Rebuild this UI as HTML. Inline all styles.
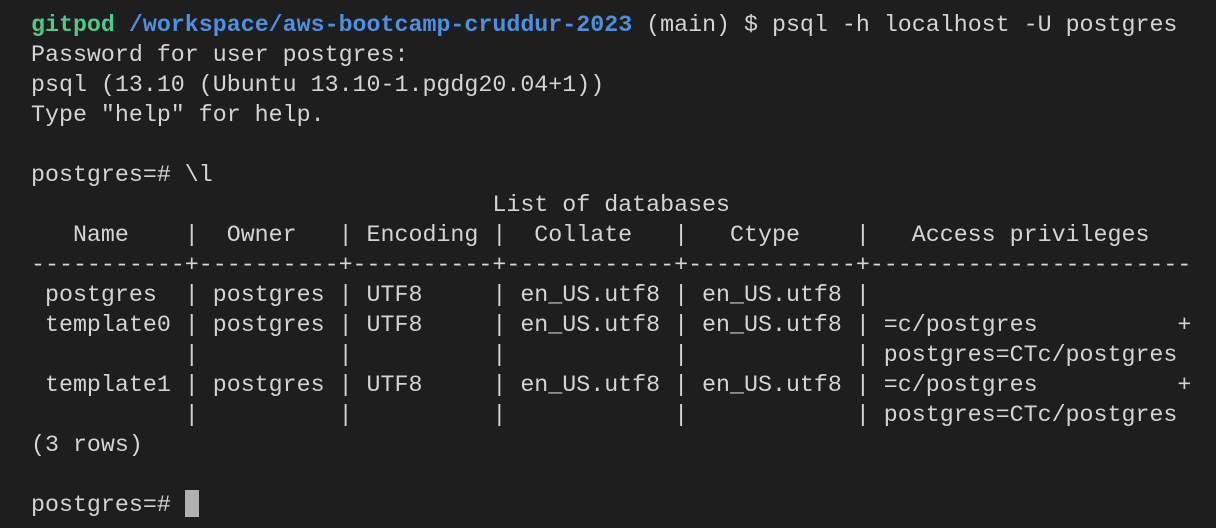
<!DOCTYPE html>
<html><head><style>
html,body{margin:0;padding:0;background:#1e1e1e;width:1216px;height:528px;overflow:hidden}
pre{margin:0;position:absolute;left:31px;top:10px;font-family:"Liberation Mono",monospace;font-size:23.3px;line-height:30px;color:#d4d4d4}
.g{color:#4ec98a;font-weight:bold}.b{color:#4f8fe0;font-weight:bold}
.c{display:inline-block;width:14px;height:27px;background:#b0b0b0;vertical-align:-6px}
</style></head><body><pre><span class="g">gitpod</span> <span class="b">/workspace/aws-bootcamp-cruddur-2023</span> (main) $ psql -h localhost -U postgres
Password for user postgres: 
psql (13.10 (Ubuntu 13.10-1.pgdg20.04+1))
Type "help" for help.

postgres=# \l
                                 List of databases
   Name    |  Owner   | Encoding |  Collate   |   Ctype    |   Access privileges   
-----------+----------+----------+------------+------------+-----------------------
 postgres  | postgres | UTF8     | en_US.utf8 | en_US.utf8 | 
 template0 | postgres | UTF8     | en_US.utf8 | en_US.utf8 | =c/postgres          +
           |          |          |            |            | postgres=CTc/postgres
 template1 | postgres | UTF8     | en_US.utf8 | en_US.utf8 | =c/postgres          +
           |          |          |            |            | postgres=CTc/postgres
(3 rows)

postgres=# <span class="c"></span></pre></body></html>
